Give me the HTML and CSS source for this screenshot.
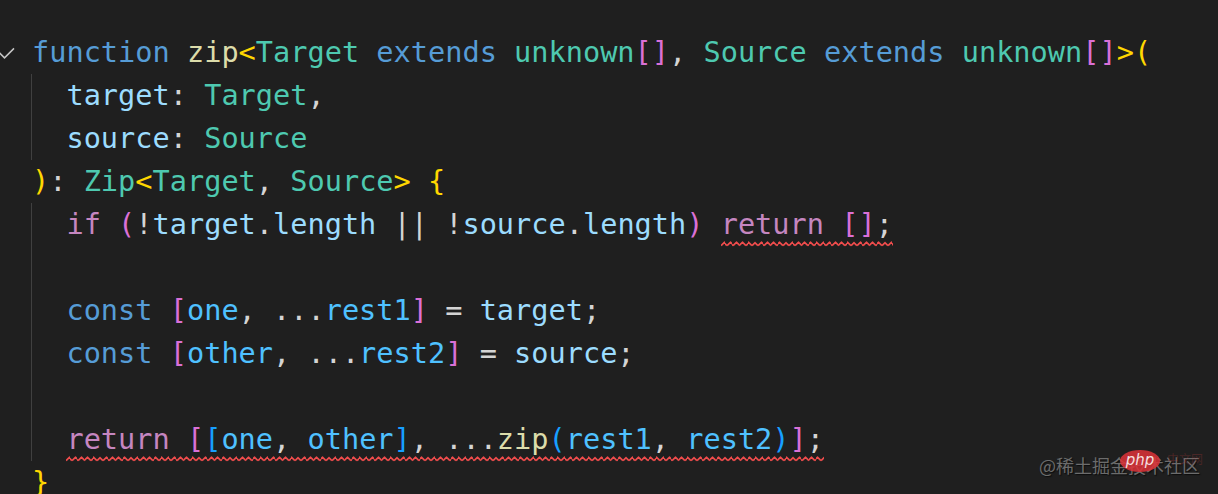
FILE: index.html
```html
<!DOCTYPE html>
<html lang="en">
<head>
<meta charset="utf-8">
<title>zip</title>
<link rel="stylesheet" href="styles.css">
</head>
<body>
<div class="editor">
  <div class="gutter">
    <div class="gline">
      <svg class="chev" width="32" height="43" viewBox="0 0 32 43"><polyline points="-1,21.4 4.5,26.9 14,17.4" fill="none" stroke="#c5c5c5" stroke-width="1.5"/></svg>
    </div>
  </div>
  <div class="code">
    <div class="line"><span class="kw">function</span> <span class="fn">zip</span><span class="b1">&lt;</span><span class="ty">Target</span> <span class="kw">extends</span> <span class="ty">unknown</span><span class="b2">[]</span><span class="p">, </span><span class="ty">Source</span> <span class="kw">extends</span> <span class="ty">unknown</span><span class="b2">[]</span><span class="b1">&gt;(</span></div>
    <div class="block">
      <div class="line">  <span class="var">target</span><span class="p">: </span><span class="ty">Target</span><span class="p">,</span></div>
      <div class="line">  <span class="var">source</span><span class="p">: </span><span class="ty">Source</span></div>
    </div>
    <div class="line"><span class="b1">)</span><span class="p">: </span><span class="ty">Zip</span><span class="b1">&lt;</span><span class="ty">Target</span><span class="p">, </span><span class="ty">Source</span><span class="b1">&gt;</span> <span class="b1">{</span></div>
    <div class="block">
      <div class="line">  <span class="ctl">if</span> <span class="b2">(</span><span class="p">!</span><span class="var">target</span><span class="p">.</span><span class="var">length</span> <span class="p">||</span> <span class="p">!</span><span class="var">source</span><span class="p">.</span><span class="var">length</span><span class="b2">)</span> <span class="sq"><span class="ctl">return</span> <span class="b2">[]</span><span class="p">;</span></span></div>
      <div class="line"> </div>
      <div class="line">  <span class="kw">const</span> <span class="b2">[</span><span class="cv">one</span><span class="p">, ...</span><span class="cv">rest1</span><span class="b2">]</span> <span class="p">=</span> <span class="var">target</span><span class="p">;</span></div>
      <div class="line">  <span class="kw">const</span> <span class="b2">[</span><span class="cv">other</span><span class="p">, ...</span><span class="cv">rest2</span><span class="b2">]</span> <span class="p">=</span> <span class="var">source</span><span class="p">;</span></div>
      <div class="line"> </div>
      <div class="line">  <span class="sq"><span class="ctl">return</span> <span class="b2">[</span><span class="b3">[</span><span class="cv">one</span><span class="p">, </span><span class="cv">other</span><span class="b3">]</span><span class="p">, ...</span><span class="fn">zip</span><span class="b3">(</span><span class="cv">rest1</span><span class="p">, </span><span class="cv">rest2</span><span class="b3">)</span><span class="b2">]</span><span class="p">;</span></span></div>
    </div>
    <div class="line"><span class="b1">}</span></div>
  </div>
</div>
<div class="watermark">
  <span class="wm-text">@稀土掘金技术社区</span>
  <span class="php">php</span>
  <span class="cn">中文网</span>
</div>
</body>
</html>
```

FILE: styles.css
```css
html, body {
  margin: 0;
  padding: 0;
  background: #1f1f1f;
  overflow: hidden;
}

.editor {
  display: flex;
  padding-top: 30.6px;
  height: 494px;
  box-sizing: border-box;
}

.gutter {
  width: 32px;
  flex: none;
}

.gline {
  height: 43px;
}

.chev {
  display: block;
}

.code {
  font-family: "DejaVu Sans Mono", monospace;
  font-size: 28.6px;
  line-height: 43px;
  color: #d4d4d4;
}

.line {
  height: 43px;
  white-space: pre;
}

.block {
  border-left: 1px solid #404040;
  margin-left: -1px;
}

.kw { color: #569cd6; }
.fn { color: #dcdcaa; }
.ty { color: #4ec9b0; }
.var { color: #9cdcfe; }
.cv { color: #4fc1ff; }
.ctl { color: #c586c0; }
.p { color: #d4d4d4; }
.b1 { color: #ffd700; }
.b2 { color: #da70d6; }
.b3 { color: #179fff; }

.sq {
  padding-bottom: 6px;
  background-image: url("data:image/svg+xml,%3Csvg xmlns='http://www.w3.org/2000/svg' width='6.2' height='6'%3E%3Cpath d='M0 4.6 L3.1 1.2 L6.2 4.6' fill='none' stroke='%23f14c4c' stroke-width='1.6' stroke-linejoin='round'/%3E%3C/svg%3E");
  background-repeat: repeat-x;
  background-position: left bottom 0;
  background-size: 6.2px 6px;
}

.watermark {
  position: absolute;
  left: 1039px;
  top: 452px;
  font-family: "Noto Sans CJK SC", sans-serif;
  font-size: 18px;
  line-height: 26px;
  white-space: nowrap;
}

.wm-text {
  color: #6c6c6c;
  text-shadow: 1px 1px 1px #0c0c0c;
}

.php {
  position: absolute;
  left: 81px;
  top: -2px;
  width: 40px;
  height: 22px;
  border-radius: 50%;
  background: rgba(222, 50, 56, 0.85);
  color: rgba(255, 255, 255, 0.85);
  font-family: "DejaVu Sans", sans-serif;
  font-style: italic;
  font-size: 15px;
  line-height: 21px;
  text-align: center;
}

.cn {
  position: absolute;
  left: 128px;
  top: -6px;
  font-size: 12px;
  color: rgba(200, 60, 60, 0.25);
}
```
